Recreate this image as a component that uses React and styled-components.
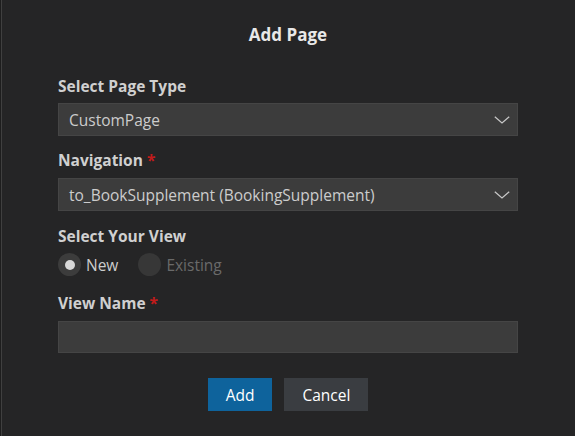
import React from "react";
import styled, { createGlobalStyle } from "styled-components";

const Global = createGlobalStyle`
  html, body { margin: 0; padding: 0; background: #1e1e1e; }
  body { font-family: "Open Sans", "Noto Sans", sans-serif; }
  * { box-sizing: border-box; }
`;

const Page = styled.div`
  width: 575px;
  height: 436px;
  margin-left: 1px;
  border-left: 1px solid #404040;
  background: #252526;
  padding: 0 58px 0 56px;
  display: flex;
  flex-direction: column;
  color: #cccccc;
`;

const Title = styled.h1`
  margin: 0;
  height: 68px;
  display: flex;
  align-items: center;
  justify-content: center;
  font-size: 17px;
  font-weight: 700;
  color: #e8e8e8;
`;

const Label = styled.div`
  margin-top: ${(p) => p.$top}px;
  line-height: 20px;
  height: 20px;
  font-size: 15.5px;
  font-weight: 700;
  color: #d0d0d0;
`;

const Required = styled.span`
  color: #c21b1b;
  margin-left: 4px;
`;

const SelectBox = styled.div`
  margin-top: ${(p) => p.$top}px;
  height: 33px;
  background: #3c3c3c;
  border: 1px solid #454545;
  display: flex;
  align-items: center;
  justify-content: space-between;
  padding: 0 7px 0 10px;
  font-size: 15.5px;
  color: #cccccc;
`;

const Chevron = () => (
  <svg width="16" height="8" viewBox="0 0 16 8" fill="none">
    <polyline points="0.8,0.8 8,7 15.2,0.8" stroke="#c8c8c8" strokeWidth="1.2" />
  </svg>
);

const TextInput = styled.div`
  margin-top: ${(p) => p.$top}px;
  height: 32px;
  background: #3c3c3c;
  border: 1px solid #454545;
`;

const RadioRow = styled.div`
  margin-top: 7px;
  height: 23px;
  display: flex;
  align-items: center;
  gap: 20px;
`;

const RadioOption = styled.div`
  display: flex;
  align-items: center;
  gap: 5px;
  font-size: 15.5px;
  color: ${(p) => (p.$disabled ? "#6a6a6a" : "#cccccc")};
`;

const RadioCircle = styled.span`
  width: 23px;
  height: 23px;
  border-radius: 50%;
  background: ${(p) => (p.$disabled ? "#373737" : "#3c3c3c")};
  display: flex;
  align-items: center;
  justify-content: center;
  &::after {
    content: "";
    width: 10px;
    height: 10px;
    border-radius: 50%;
    background: #d8d8d8;
    display: ${(p) => (p.$checked ? "block" : "none")};
  }
`;

const Buttons = styled.div`
  margin-top: 25px;
  display: flex;
  justify-content: center;
  gap: 12px;
`;

const Button = styled.button`
  height: 33px;
  padding: 0 ${(p) => p.$pad}px;
  border: none;
  background: ${(p) => (p.$primary ? "#0e639c" : "#3a3d41")};
  color: #ffffff;
  font-family: inherit;
  font-size: 15.5px;
  cursor: pointer;
`;

export default function App() {
  return (
    <>
      <Global />
      <Page>
        <Title>Add Page</Title>
        <Label $top={8}>Select Page Type</Label>
        <SelectBox $top={7}>
          <span>CustomPage</span>
          <Chevron />
        </SelectBox>
        <Label $top={14}>
          Navigation<Required>*</Required>
        </Label>
        <SelectBox $top={8}>
          <span>to_BookSupplement (BookingSupplement)</span>
          <Chevron />
        </SelectBox>
        <Label $top={15}>Select Your View</Label>
        <RadioRow>
          <RadioOption>
            <RadioCircle $checked />
            New
          </RadioOption>
          <RadioOption $disabled>
            <RadioCircle $disabled />
            Existing
          </RadioOption>
        </RadioRow>
        <Label $top={17}>
          View Name<Required>*</Required>
        </Label>
        <TextInput $top={8} />
        <Buttons>
          <Button $primary $pad={18}>Add</Button>
          <Button $pad={18}>Cancel</Button>
        </Buttons>
      </Page>
    </>
  );
}
